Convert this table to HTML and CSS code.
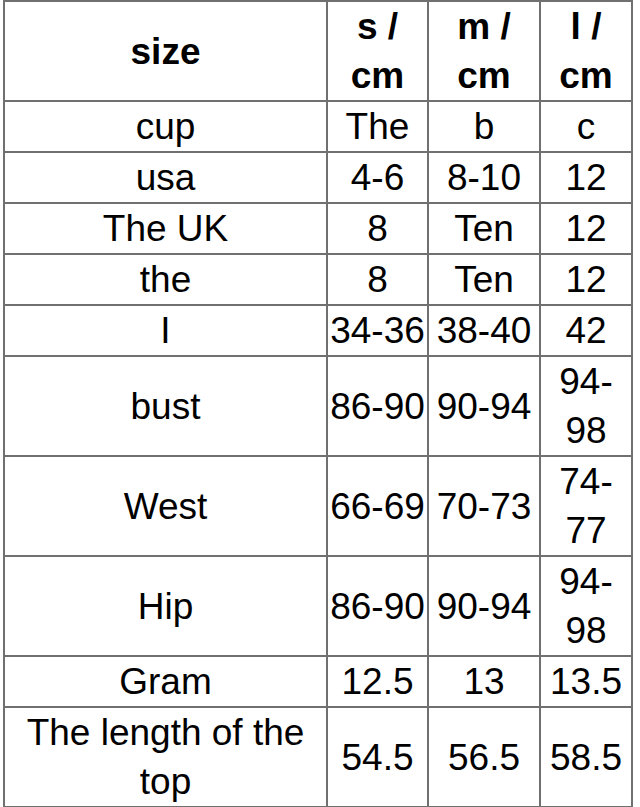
FILE: index.html
```html
<!DOCTYPE html>
<html>
<head>
<meta charset="utf-8">
<link rel="stylesheet" href="styles.css">
</head>
<body>
<table class="size-table">
  <colgroup>
    <col class="c1"><col class="c2"><col class="c3"><col class="c4">
  </colgroup>
  <thead>
    <tr><th>size</th><th>s / cm</th><th>m / cm</th><th>l / cm</th></tr>
  </thead>
  <tbody>
    <tr><td>cup</td><td>The</td><td>b</td><td>c</td></tr>
    <tr><td>usa</td><td>4-6</td><td>8-10</td><td>12</td></tr>
    <tr><td>The UK</td><td>8</td><td>Ten</td><td>12</td></tr>
    <tr><td>the</td><td>8</td><td>Ten</td><td>12</td></tr>
    <tr><td>I</td><td>34-36</td><td>38-40</td><td>42</td></tr>
    <tr><td>bust</td><td>86-90</td><td>90-94</td><td>94-98</td></tr>
    <tr><td>West</td><td>66-69</td><td>70-73</td><td>74-77</td></tr>
    <tr><td>Hip</td><td>86-90</td><td>90-94</td><td>94-98</td></tr>
    <tr><td>Gram</td><td>12.5</td><td>13</td><td>13.5</td></tr>
    <tr><td>The length of the top</td><td>54.5</td><td>56.5</td><td>58.5</td></tr>
  </tbody>
</table>
</body>
</html>
```

FILE: styles.css
```css
html, body {
  margin: 0;
  padding: 0;
  background: #ffffff;
}

.size-table {
  margin-left: 3px;
  border-collapse: collapse;
  table-layout: fixed;
  width: 630px;
  font-family: "Liberation Sans", Arial, sans-serif;
  font-size: 37px;
  line-height: 49px;
  color: #000;
}

.c1 { width: 323px; }
.c2 { width: 101px; }
.c3 { width: 112px; }
.c4 { width: 92px; }

.size-table th,
.size-table td {
  border: 2px solid #707070;
  padding: 0;
  text-align: center;
  vertical-align: middle;
}

.size-table th {
  font-weight: bold;
}

.size-table td {
  font-weight: normal;
}
```
